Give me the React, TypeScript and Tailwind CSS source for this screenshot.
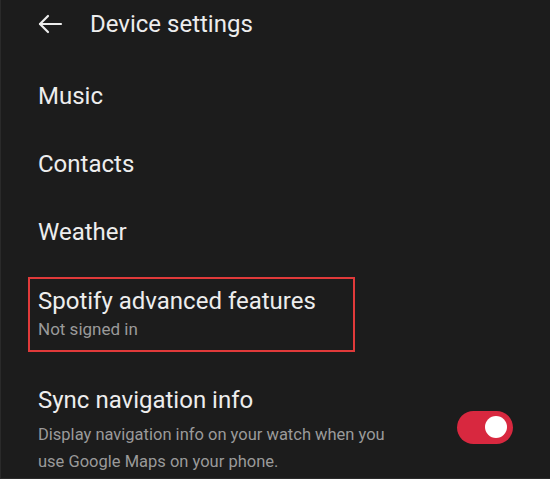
export default function App() {
  const items = ["Music", "Contacts", "Weather"]
  return (
    <div
      className="w-[550px] h-[479px] overflow-hidden bg-[#1c1c1c] text-[#ededed] border-l border-b border-[#2a2a2a]"
      style={{ fontFamily: "Roboto, 'Liberation Sans', sans-serif" }}
    >
      {/* header */}
      <div className="h-[48px] flex items-center pl-[36px]">
        <svg width="26" height="20" viewBox="0 0 26 20" fill="none" stroke="#ededed" strokeWidth="2.2" strokeLinecap="round" strokeLinejoin="round">
          <path d="M24 10H3" />
          <path d="M11 2L3 10l8 8" />
        </svg>
        <span className="ml-[27px] text-[24px] leading-none">Device settings</span>
      </div>

      <div className="h-[14px]" />

      {items.map((t) => (
        <div key={t} className="h-[68px] flex items-center pl-[37px] text-[24px]">
          {t}
        </div>
      ))}

      <div className="mt-[11px] ml-[27px] w-[327px] h-[75px] border-2 border-[#e03a3a] pl-[8px] pt-[7px]">
        <div className="text-[24px] leading-[30px]">Spotify advanced features</div>
        <div className="text-[17px] leading-[22px] text-[#9a9a9a] mt-[2px]">Not signed in</div>
      </div>

      <div className="flex items-center pl-[37px] pr-[37px] mt-[33px]">
        <div className="flex-1">
          <div className="text-[24px] leading-[30px]">Sync navigation info</div>
          <div className="text-[16.5px] leading-[27px] text-[#9a9a9a] mt-[6px] w-[360px]">
            Display navigation info on your watch when you use Google Maps on your phone.
          </div>
        </div>
        <div className="w-[56px] h-[33px] rounded-full bg-[#d8283f] flex items-center justify-end pr-[6px] -mt-[6px]">
          <div className="w-[22px] h-[22px] rounded-full bg-white" />
        </div>
      </div>
    </div>
  )
}
